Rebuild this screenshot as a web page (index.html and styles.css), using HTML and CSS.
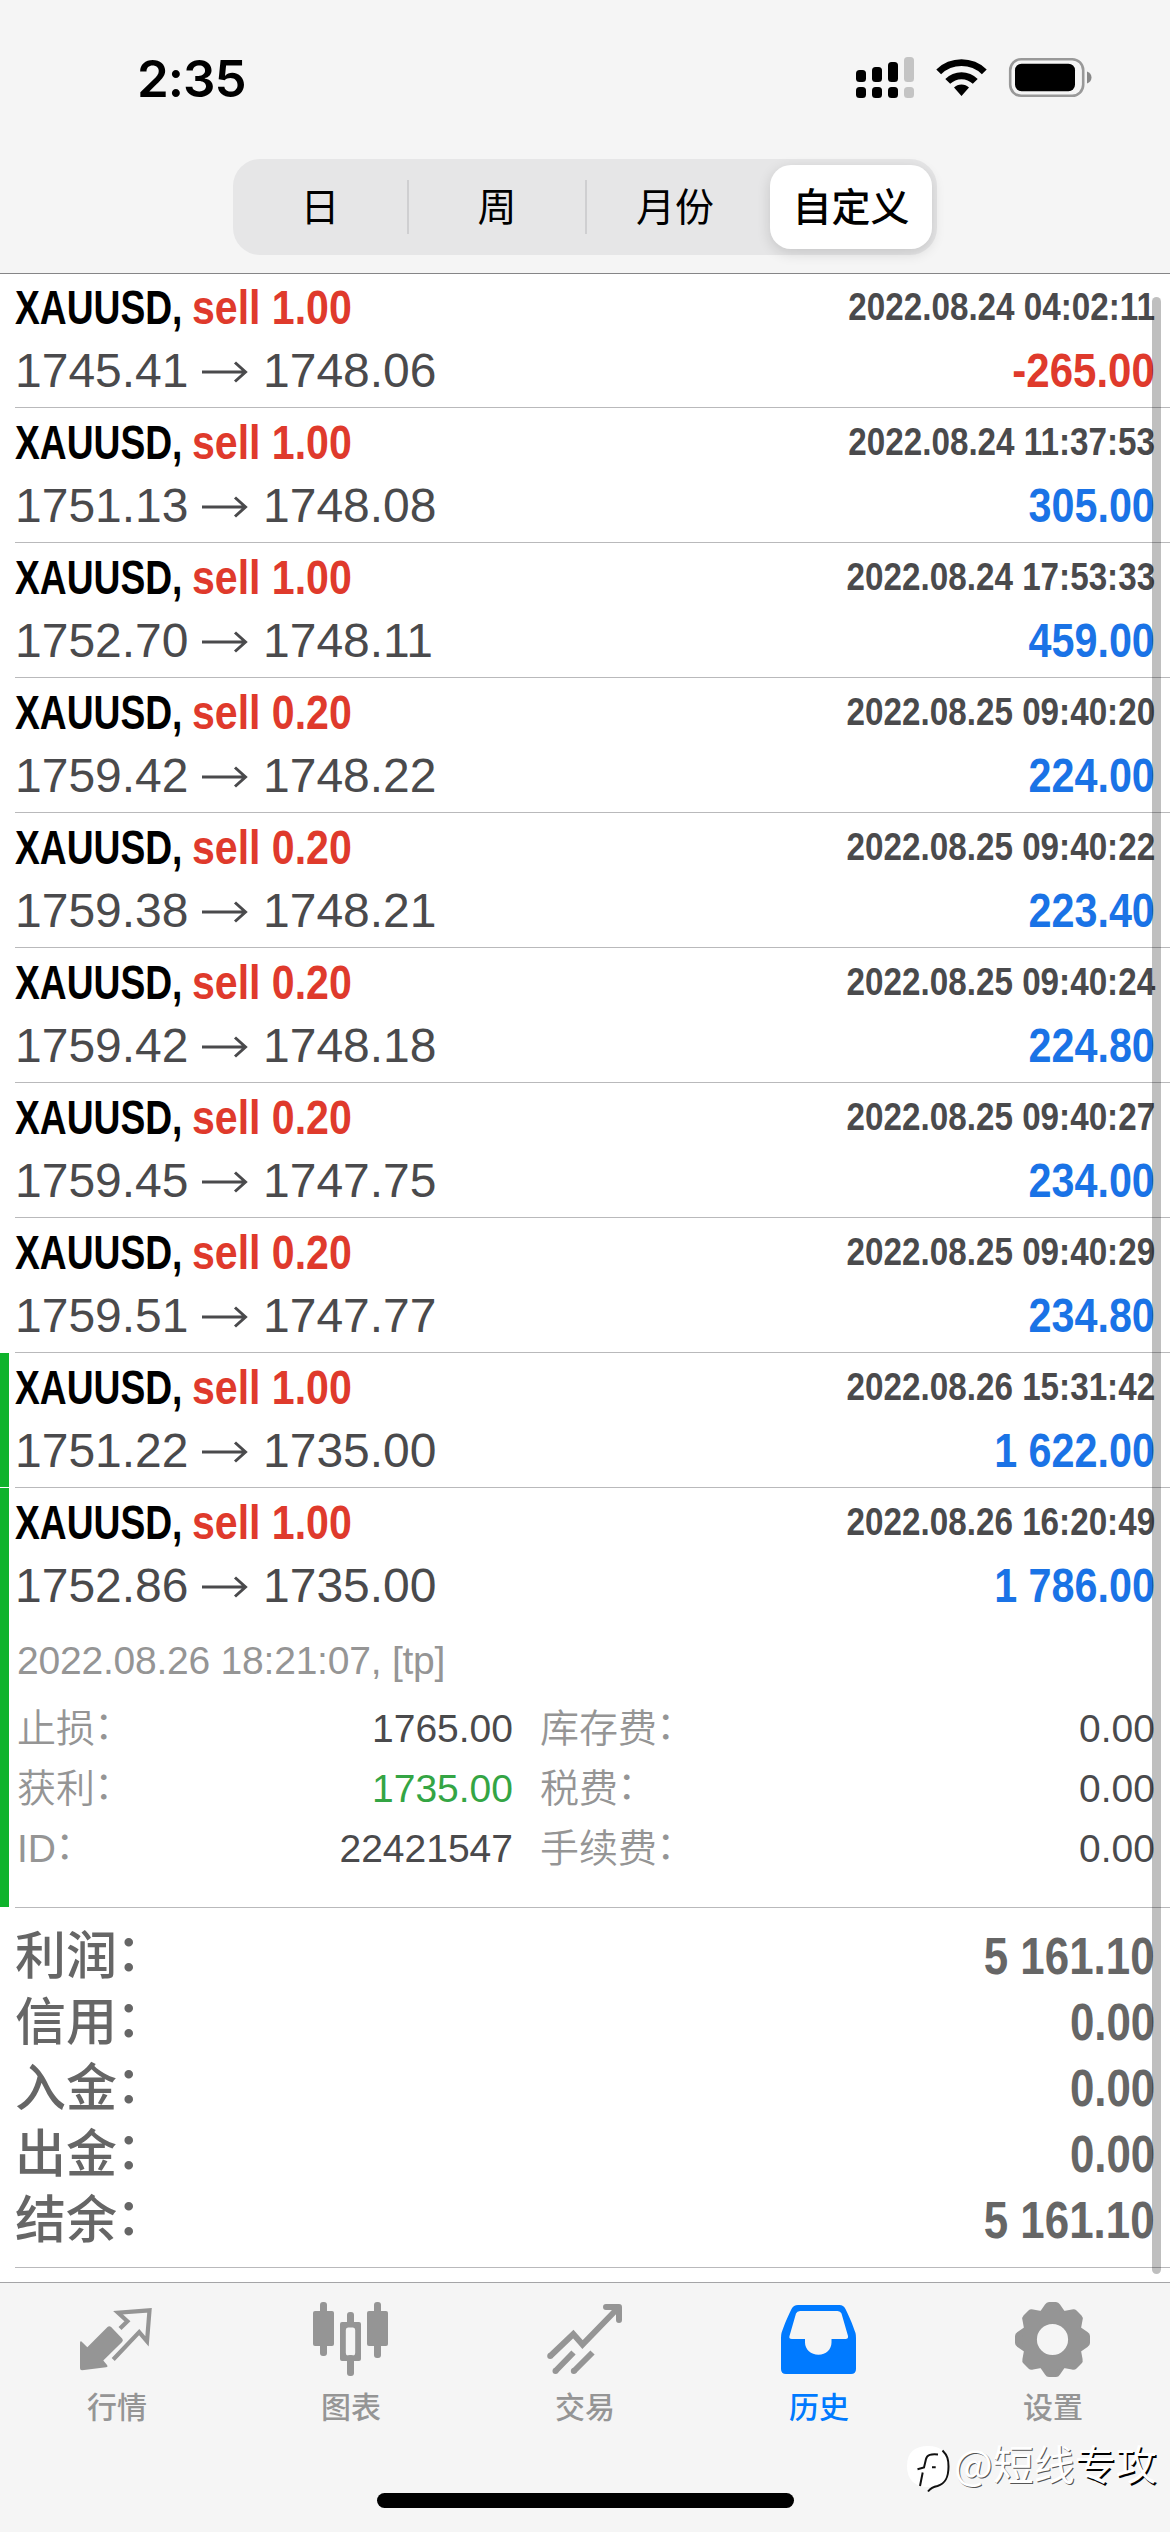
FILE: index.html
```html
<!DOCTYPE html>
<html lang="zh-CN">
<head>
<meta charset="utf-8">
<title>历史</title>
<link rel="stylesheet" href="styles.css">
</head>
<body>
<div class="screen">
  <header class="top">
    <div class="status">
      <span class="clock">2:35</span>
      <svg class="status-icons" width="240" height="48" viewBox="854 54 240 48">
        <g fill="#000">
          <rect x="856" y="70" width="10" height="12" rx="3.5"/><rect x="872" y="67" width="10" height="15" rx="3.5"/><rect x="888" y="62" width="10" height="20" rx="3.5"/>
          <rect x="856" y="87" width="10" height="11" rx="3.5"/><rect x="872" y="87" width="10" height="11" rx="3.5"/><rect x="888" y="87" width="10" height="11" rx="3.5"/>
        </g>
        <g fill="#c4c4c4"><rect x="904" y="57" width="10" height="25" rx="3.5"/><rect x="904" y="87" width="10" height="11" rx="3.5"/></g>
        <path d="M936.3 69.5a35.8 35.8 0 0 1 50.4 0l-4.8 4.8a29 29 0 0 0-40.8 0zM945.3 79a22.8 22.8 0 0 1 32.4 0l-4.9 4.8a16 16 0 0 0-22.6 0zM954 87.500a10.600 10.600 0 0 1 15 0L961.500 96z"/>
        <rect x="1010.200" y="59.200" width="73" height="36.600" rx="11" fill="none" stroke="#999" stroke-width="2.600"/>
        <rect x="1015" y="63.700" width="60" height="27.500" rx="6.500"/>
        <path d="M1087 71.500c2.800 1 4.500 3.300 4.500 6s-1.700 5-4.500 6z" fill="#888"/>
      </svg>
    </div>
    <nav class="segments">
      <span class="segment first">日</span>
      <i class="divider"></i>
      <span class="segment">周</span>
      <i class="divider"></i>
      <span class="segment">月份</span>
      <span class="segment active">自定义</span>
    </nav>
  </header>

  <main class="history">
    <ul class="deals" id="deals"></ul>
    <section class="details">
      <div class="comment">2022.08.26 18:21:07, [tp]</div>
      <dl class="grid">
        <dt>止损<i>：</i></dt><dd>1765.00</dd><dt>库存费<i>：</i></dt><dd>0.00</dd>
        <dt>获利<i>：</i></dt><dd class="green">1735.00</dd><dt>税费<i>：</i></dt><dd>0.00</dd>
        <dt>ID<i>：</i></dt><dd>22421547</dd><dt>手续费<i>：</i></dt><dd>0.00</dd>
      </dl>
    </section>
    <section class="summary">
      <div class="total"><span>利润<i>：</i></span><b class="narrow">5 161.10</b></div>
      <div class="total"><span>信用<i>：</i></span><b class="narrow">0.00</b></div>
      <div class="total"><span>入金<i>：</i></span><b class="narrow">0.00</b></div>
      <div class="total"><span>出金<i>：</i></span><b class="narrow">0.00</b></div>
      <div class="total"><span>结余<i>：</i></span><b class="narrow">5 161.10</b></div>
    </section>
    <div class="scrollbar"></div>
  </main>

  <footer class="tabs">
    <div class="tab">
      <svg viewBox="77 2298 80 82" width="80" height="82"><path fill="currentColor" d="M80 2343q0-3 2.500-.6l4.800 4.900L107.500 2327q1.800-1.700 3.600 0l11 11.500q1.600 1.800 0 3.600L103.300 2360.500l3.700 4.500q1.400 2-1 2.200L82 2370.300q-2 0-2-2z"/><path fill="none" stroke="currentColor" stroke-width="4.200" d="M120 2328.500l7.400-7.300-9.300-8.500 31.400-2.400-2.500 31-7.800-9.200-26 27.400"/></svg>
      <span>行情</span>
    </div>
    <div class="tab">
      <svg viewBox="311 2298 80 82" width="80" height="82" fill="currentColor"><rect x="313" y="2311" width="21" height="35" rx="2"/><rect x="320" y="2302" width="7" height="54" rx="3"/><rect x="367" y="2311" width="21" height="35" rx="2"/><rect x="374" y="2302" width="7" height="56" rx="3"/><rect x="347" y="2312" width="7" height="15" rx="3"/><rect x="347" y="2355" width="7" height="21" rx="3"/><path fill-rule="evenodd" d="M342 2322h17q2 0 2 2v35q0 2-2 2h-17q-2 0-2-2v-35q0-2 2-2zM348 2327.500q-2.200 0-2.200 2.500v23q0 2.500 2.200 2.500h5q2.200 0 2.200-2.500v-23q0-2.500-2.200-2.500z"/></svg>
      <span>图表</span>
    </div>
    <div class="tab">
      <svg viewBox="545 2298 80 82" width="80" height="82" fill="none" stroke="currentColor" stroke-width="6"><path stroke-linecap="round" stroke-linejoin="round" d="M606 2307h13v13"/><path d="M618 2308l-35.500 36.500-9.200-10.500-23 22"/><path d="M573.500 2352.500l-18 18.500M592.500 2352.500L574 2371"/><g fill="currentColor" stroke="none"><circle cx="550.200" cy="2356" r="3"/><circle cx="555.500" cy="2371" r="3"/><circle cx="573.800" cy="2371" r="3"/></g></svg>
      <span>交易</span>
    </div>
    <div class="tab selected">
      <svg viewBox="779 2298 80 82" width="80" height="82"><path fill="currentColor" d="M797.500 2305h42q4 0 6 4c5 10 8 18 10 24q.5 2 .5 5v31q0 5-5 5h-65q-5 0-5-5v-31q0-3 .5-5c2-6 5-14 10-24q2-4 6.500-4z"/><path fill="#f5f5f5" d="M800 2311h37.500q3 0 4 2.500l6.500 22.500q.5 3-2.500 3h-14v3.500c0 7-5.500 12.200-13 12.200s-13.500-5.200-13.500-12.200v-3.500h-13q-3.500 0-2.500-3l6.500-22.500q1-2.500 4-2.500z"/></svg>
      <span>历史</span>
    </div>
    <div class="tab">
      <svg viewBox="-39.500 -41.500 80 82" width="80" height="82"><g fill="currentColor"><path id="tooth" d="M-13-27L-7.500-35q1.500-2.500 4-2.500h7q2.500 0 4 2.500L13-27z"/><use href="#tooth" transform="rotate(45)"/><use href="#tooth" transform="rotate(90)"/><use href="#tooth" transform="rotate(135)"/><use href="#tooth" transform="rotate(180)"/><use href="#tooth" transform="rotate(225)"/><use href="#tooth" transform="rotate(270)"/><use href="#tooth" transform="rotate(315)"/></g><circle r="23" fill="none" stroke="currentColor" stroke-width="14.800"/></svg>
      <span>设置</span>
    </div>
    <div class="home"></div>
    <div class="watermark">
      <svg width="50" height="50" viewBox="906 2444 50 50"><path fill="#fff" d="M907 2466c0-14 8-20 21-20s20.500 6 20.500 20-7.500 21-20.500 21-21-7-21-21z"/><path fill="none" stroke="#111" stroke-width="2" d="M942.500 2450.500c5 5 6 9 6 16 0 11-3 17-11 19.500q-6 1-9.500 5.500"/><path fill="none" stroke="#111" stroke-width="2" d="M938 2454.500c-7-.5-11 0-12 4.500l-2 8.500-6.500 1.800M922.700 2472.500l-2.700 13.500M932 2467.300h3.700"/></svg>
      <span>@短线<b>专攻</b></span>
    </div>
  </footer>
</div>
<script src="deals.js"></script>
</body>
</html>
```
FILE: deals.js
```js
const deals = [
  ["1.00", "1745.41", "1748.06", "2022.08.24 04:02:11", "-265.00"],
  ["1.00", "1751.13", "1748.08", "2022.08.24 11:37:53", "305.00"],
  ["1.00", "1752.70", "1748.11", "2022.08.24 17:53:33", "459.00"],
  ["0.20", "1759.42", "1748.22", "2022.08.25 09:40:20", "224.00"],
  ["0.20", "1759.38", "1748.21", "2022.08.25 09:40:22", "223.40"],
  ["0.20", "1759.42", "1748.18", "2022.08.25 09:40:24", "224.80"],
  ["0.20", "1759.45", "1747.75", "2022.08.25 09:40:27", "234.00"],
  ["0.20", "1759.51", "1747.77", "2022.08.25 09:40:29", "234.80"],
  ["1.00", "1751.22", "1735.00", "2022.08.26 15:31:42", "1 622.00", true],
  ["1.00", "1752.86", "1735.00", "2022.08.26 16:20:49", "1 786.00", true],
];
const arrow = '<svg class="arrow" width="46" height="26" viewBox="0 0 46 26"><path d="M0 13h43M33 3.500l10.500 9.500L33 22.500"/></svg>';

document.getElementById("deals").innerHTML = deals.map(([volume, open, close, time, profit, hit]) => `
  <li class="deal${hit ? " hit" : ""}">
    <div class="deal-body">
      <div class="left">
        <div class="title"><b class="symbol">XAUUSD,</b><b class="side">sell ${volume}</b></div>
        <div class="prices"><span class="open">${open}</span>${arrow}<span>${close}</span></div>
      </div>
      <div class="right">
        <b class="time narrow">${time}</b>
        <b class="profit narrow${profit[0] === "-" ? " loss" : ""}">${profit}</b>
      </div>
    </div>
  </li>`).join("");

const last = document.getElementById("deals").lastElementChild;
last.classList.add("expanded");
last.querySelector(".deal-body").after(document.querySelector(".details"));
```
FILE: styles.css
```css
* { box-sizing: border-box; margin: 0; padding: 0; }
body { background: #fff; font-family: "Liberation Sans", "Noto Sans CJK SC", sans-serif; }
.screen { width: 1170px; height: 2532px; display: flex; flex-direction: column; overflow: hidden; }

.top { height: 273px; flex: none; background: #f5f5f5; box-shadow: 0 1px 0 #858587; position: relative; z-index: 1; }
.status { height: 159px; padding: 54px 76px 0 137px; display: flex; justify-content: space-between; }
.clock { font: 600 51px/49px Inter, sans-serif; letter-spacing: -1px; }
.status-icons { display: block; }
.segments { width: 704px; height: 96px; margin: 0 auto; padding: 6px 5px 6px 0; display: flex; align-items: center; border-radius: 27px; background: #e6e6e7; font: 39px/79px "Noto Sans CJK SC", sans-serif; }
.segment { width: 176px; height: 84px; text-align: center; color: #000; }
.segment.first { width: 174px; }
.segment.active { width: 162px; margin-left: 7px; border-radius: 21px; background: #fff; font-weight: 500; box-shadow: 0 4px 14px rgba(0, 0, 0, .14); }
.divider { width: 2px; height: 54px; background: #cfcfd1; }

.history { flex: 1; position: relative; }
.deals { list-style: none; }
.deal { min-height: 135px; padding-left: 15px; }
.deal-body { height: 135px; padding: 3px 15px 0 0; display: flex; justify-content: space-between; border-bottom: 1px solid #b9b9bb; }
.hit { background: linear-gradient(#0fb32c, #0fb32c) 0 0 / 9px calc(100% - 1px) no-repeat; }
.title, .prices { height: 63px; line-height: 63px; font-size: 48px; display: flex; }
.symbol { width: 177px; transform: scaleX(.775); transform-origin: left; color: #000; }
.side { transform: scaleX(.855); transform-origin: left; color: #df3a2c; }
.prices { color: #4a4a4c; align-items: center; }
.open { width: 187px; }
.arrow { margin: 2px 15px 0 0; fill: none; stroke: #4a4a4c; stroke-width: 3; }
.right { display: flex; flex-direction: column; align-items: flex-end; }
.narrow { transform: scaleX(.86); transform-origin: right; white-space: pre; }
.time { font-size: 39px; line-height: 61px; color: #4a4a4c; transform: scaleX(.852); }
.profit { font-size: 48px; line-height: 67px; color: #1a73e6; }
.profit.loss { color: #df3a2c; transform: scaleX(.875); }

.expanded .deal-body { height: 129px; border: 0; }
.details { height: 291px; padding: 14px 15px 0 2px; border-bottom: 1px solid #b9b9bb; font-size: 39px; line-height: 60px; color: #959595; }
.comment { margin-bottom: 8px; letter-spacing: -.22px; }
.grid { display: grid; grid-template-columns: 160px 336px 240px 1fr; }
.grid dt { font-weight: 350; }
.grid dt i, .total i { display: inline-block; font-style: normal; transform: translate(-1px, -3px); }
.grid dt:nth-of-type(even) { padding-left: 27px; }
.grid dd { text-align: right; color: #4a4a4c; }
.grid .green { color: #34a544; }

.summary { height: 360px; margin-left: 15px; padding: 16px 15px 0 0; border-bottom: 1px solid #b9b9bb; font-size: 51px; line-height: 66px; color: #666; }
.total { display: flex; justify-content: space-between; }
.total span { font-weight: 500; }
.scrollbar { position: absolute; top: 24px; right: 9px; width: 9px; height: 1977px; border-radius: 5px; background: rgba(0, 0, 0, .25); }

.tabs { height: 250px; flex: none; position: relative; display: flex; background: #f5f5f5; border-top: 1px solid #a5a5a7; }
.tab { flex: 1; display: flex; flex-direction: column; align-items: center; padding-top: 15px; color: #959595; font: 500 30px/36px "Noto Sans CJK SC", sans-serif; }
.tab span { margin-top: 7px; }
.selected { color: #007aff; }
.home { position: absolute; left: 377px; bottom: 24px; width: 417px; height: 15px; border-radius: 8px; background: #000; }
.watermark { position: absolute; left: 906px; top: 161px; display: flex; font: 41px/37px "Noto Sans CJK SC", sans-serif; color: #fff; text-shadow: 1px 1px 0 #555; white-space: nowrap; }
.watermark span { margin-left: -2px; }
.watermark b { font-weight: 400; text-shadow: 1.5px 1.5px 0 #000; }
```
